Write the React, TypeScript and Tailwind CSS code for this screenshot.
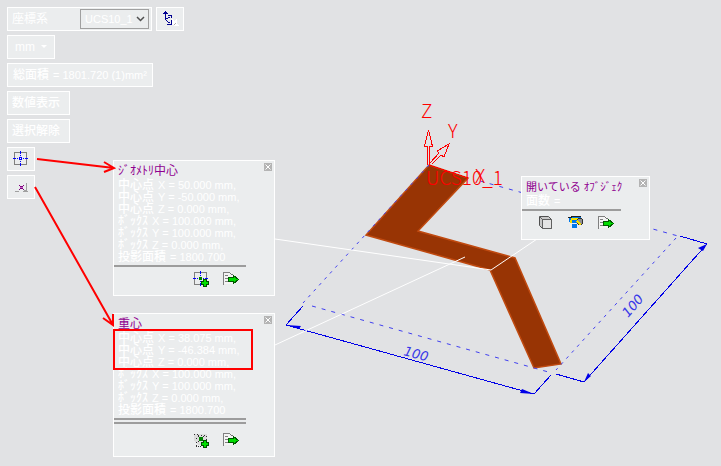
import React from "react";

const jp = "font-['Liberation_Sans','Noto_Sans_CJK_JP',sans-serif]";
const box = "border border-white bg-[#ebedee] text-white";

function CenterIcon({ add = false }: { add?: boolean }) {
  return (
    <svg width="16" height="16" viewBox="0 0 16 16" shapeRendering="crispEdges" aria-hidden="true">
      <rect x="1.5" y="1.5" width="12" height="12" fill="none" stroke="#808080" />
      <path d="M7.5 0v3M7.5 4v1M7.5 10v1M7.5 12v3M0 7.5h3M4 7.5h1M10 7.5h1M12 7.5h3" stroke="#0000ff" />
      <rect x="6.5" y="6.5" width="2" height="2" fill={add ? "#008000" : "#ffffff"} stroke={add ? "#008000" : "#0000ff"} />
      {add && <Plus />}
    </svg>
  );
}

function Plus() {
  return (
    <path d="M10.5 8.5h3v2h2v3h-2v2h-3v-2h-2v-3h2z" fill="#00e000" stroke="#005000" />
  );
}

function GravityIcon({ add = false }: { add?: boolean }) {
  return add ? (
    <svg width="16" height="16" viewBox="0 0 16 16" shapeRendering="crispEdges" aria-hidden="true">
      <path d="M1 2h13v6h-4v5H6L1 9z" fill="#dcdcdc" />
      <path d="M1 2.5h6M5 3.5h9M3 6.5h1M13.5 4v4M3.5 10v4" stroke="#303030" strokeDasharray="1 2" />
      <path d="M3 14.5h6" stroke="#303030" strokeDasharray="1 1" />
      <rect x="6" y="5" width="4" height="4" fill="#008000" />
      <path d="M5 4h1v1H5zM10 4h1v1h-1zM5 9h1v1H5z" fill="#303030" />
      <Plus />
    </svg>
  ) : (
    <svg width="16" height="16" viewBox="0 0 16 16" shapeRendering="crispEdges" aria-hidden="true">
      <path d="M2 12.5h4M10 12.5h5M13.5 4v8M11 11.500h2" stroke="#a0a0a0" />
      <rect x="7" y="7" width="3" height="3" fill="#c060c0" />
      <path d="M6 6h1v1H6zM10 6h1v1h-1zM6 10h1v1H6zM10 10h1v1h-1zM7 7h3v1H7zM7 9h3v1H7z" fill="#800080" />
    </svg>
  );
}

function ExportIcon() {
  return (
    <svg width="16" height="16" viewBox="0 0 16 16" shapeRendering="crispEdges" aria-hidden="true">
      <path d="M1 1h6l4 4v8H1z" fill="#f4f4f4" />
      <path d="M.5 14V1.5h6M2 4.5h3M2 7.5h3M2 10.5h3" fill="none" stroke="#808080" />
      <path d="M7 2l4 3" stroke="#707070" strokeDasharray="1 1" />
      <path d="M5.5 6.5h5v-2l5 4-5 4v-2h-5z" fill="#00dc00" stroke="#005800" />
    </svg>
  );
}

function CubeIcon() {
  return (
    <svg width="16" height="16" viewBox="0 0 16 16" aria-hidden="true">
      <path d="M1.5 1.5h9l3 3v9h-9l-3-3z" fill="#c8c8c8" stroke="#505050" />
      <path d="M4.500 4.500h9v9h-9z" fill="#e4e4e4" stroke="#606060" />
      <path d="M2 2l3 3" stroke="#606060" />
    </svg>
  );
}

function PaintIcon() {
  return (
    <svg width="16" height="16" viewBox="0 0 16 16" shapeRendering="crispEdges" aria-hidden="true">
      <path d="M1 2h12v4H9v2H4V7H1z" fill="#0078e8" />
      <path d="M0 2.5h4M3 1.5h10" stroke="#202020" />
      <path d="M3 4h7M3 5v3" stroke="#f4e000" strokeWidth="2" />
      <ellipse cx="12" cy="6.5" rx="3" ry="3" fill="#909090" stroke="#303030" />
      <path d="M9 6l4 4" stroke="#f4d800" strokeWidth="2" />
      <rect x="4" y="9" width="5" height="4" fill="#0078e8" />
    </svg>
  );
}

function AxesIcon() {
  return (
    <svg width="18" height="18" viewBox="0 0 18 18" shapeRendering="crispEdges" aria-hidden="true">
      <path d="M11 9l2 2 3-2v4l2 3h-3l-4-1z" fill="#ffffff" />
      <path d="M13 15l2-2" stroke="#b0b0b0" />
      <path d="M4 1h1v1h1v1h1v1H5v6H4V4H2V3h1V2h1zM5 8h2v1H5zM7 7h2v1H7zM7 5h4v3h-1V6H7zM5 10h1v1H5zM6 11h1v1H6zM7 12h1v1H7zM8 12h1v1H8zM10 10h1v5H6v-1h4z" fill="#000090" />
    </svg>
  );
}

function CloseButton() {
  return (
    <button type="button" aria-label="閉じる" className="flex size-2 items-center justify-center bg-[#b4b4b4]">
      <svg width="8" height="8" viewBox="0 0 8 8" aria-hidden="true">
        <path d="M1.5 1.5l5 5M6.5 1.5l-5 5" stroke="#ffffff" />
      </svg>
    </button>
  );
}

function Row({ label, value }: { label: string; value: string }) {
  return (
    <div className="flex items-baseline gap-1 whitespace-nowrap">
      <dt className="text-xs leading-3 font-medium">{label}</dt>
      <dd className="text-[11px] leading-3">{value}</dd>
    </div>
  );
}

function Rows({ rows }: { rows: string[][] }) {
  return (
    <dl>
      {rows.map(([label, value]) => (
        <Row key={label + value} label={label} value={value} />
      ))}
    </dl>
  );
}

const geometry = [
  ["中心点", "X = 50.000 mm,"],
  ["中心点", "Y = -50.000 mm,"],
  ["中心点", "Z = 0.000 mm,"],
  ["ﾎﾞｯｸｽ", "X = 100.000 mm,"],
  ["ﾎﾞｯｸｽ", "Y = 100.000 mm,"],
  ["ﾎﾞｯｸｽ", "Z = 0.000 mm,"],
  ["投影面積", "= 1800.700"],
];

const gravity = [
  ["中心点", "X = 38.075 mm,"],
  ["中心点", "Y = -46.384 mm,"],
  ["中心点", "Z = 0.000 mm,"],
  ...geometry.slice(3),
];

type PanelProps = { title: string; className: string; titleSize?: string; children: React.ReactNode };

function Panel({ title, className, titleSize = "text-xs", children }: PanelProps) {
  return (
    <section className={`absolute ${box} ${className}`}>
      <header className="flex items-start justify-between pt-0.5 pr-0.5 pl-1">
        <h2 className={`${titleSize} leading-4 whitespace-nowrap text-[#900090]`}>{title}</h2>
        <CloseButton />
      </header>
      {children}
    </section>
  );
}

function Scene() {
  return (
    <svg className="absolute top-0 left-0" width="721" height="466" viewBox="0 0 721 466" role="img" aria-label="UCS10_1">
      <path d="M429 165L468 178L418 231L515 258L561 364L534 368L490 270L366 235Z" fill="#983404" stroke="#c04a10" strokeWidth="1.5" />
      <g fill="none" stroke="#4040f0">
        <path d="M429 165L303 303" strokeDasharray="3 5" />
        <path d="M312 306L552 373" strokeDasharray="4 6" />
        <path d="M480 181L678 236" strokeDasharray="4 6" />
        <path d="M676 238L556 370" strokeDasharray="3 5" />
      </g>
      <g fill="none" stroke="#0000e8" shapeRendering="crispEdges">
        <path d="M303 306L286 325L534 394L551 375M556 374L584 382L707 244L680 236" />
      </g>
      <g fill="#0000e8">
        <path d="M286 325l15 1-2 3zM534 394l-14-1 2-4zM584 382l4-9 3 3zM707 244l-9 4 5 3z" />
      </g>
      <g fill="#3838e8" fontFamily="DejaVu Sans, sans-serif" fontSize="13" fontStyle="italic">
        <text transform="translate(403 355) rotate(15)">100</text>
        <text transform="translate(628 318) rotate(-49)">100</text>
      </g>
      <path d="M275 239L491 270L540 237M275 345L465 257" fill="none" stroke="#ffffff" />
      <g fill="none" stroke="#ff0000" shapeRendering="crispEdges">
        <path d="M427.5 165V146.5h-3L428.5 130l4 16.5h-3V165M430 163l9-10-2-2 12-7-5 13-3-2-9 9M429 165l39 13" />
      </g>
      <g fill="#ff0000" fontFamily="Noto Sans CJK JP, sans-serif" fontWeight="300" fontSize="19">
        <text x="421" y="118">Z</text>
        <text x="448" y="138">Y</text>
        <text x="475" y="183">X</text>
        <text x="426" y="185">UCS10_1</text>
      </g>
    </svg>
  );
}

function Annotations() {
  return (
    <svg className="pointer-events-none absolute top-0 left-0" width="721" height="466" viewBox="0 0 721 466" aria-hidden="true">
      <g fill="none" stroke="#ff0000" strokeWidth="2">
        <path d="M37 159L114 168M104 162L114 168L104 172" />
        <path d="M35 187L113 325M103 318L113 325V314" />
        <rect x="114" y="330" width="138" height="39" />
      </g>
    </svg>
  );
}

export default function App() {
  const toolButton = `${box} flex h-6 items-center whitespace-nowrap`;
  return (
    <main className={`relative min-h-screen overflow-hidden bg-[#e1e2e4] ${jp} text-xs`}>
      <Scene />
      <div className="relative flex flex-col items-start gap-1 pt-[7px] pl-[7px]">
        <div className="flex gap-1">
          <div className={`${box} flex h-6 items-center gap-8 pr-0.5 pl-1`}>
            <label htmlFor="ucs">座標系</label>
            <div className="relative flex">
              <select id="ucs" defaultValue="UCS10_1" className="h-5 w-[69px] appearance-none border border-[#a0a0a0] bg-[#ebedee] pl-1 text-[11px] text-white">
                <option>UCS10_1</option>
              </select>
              <svg className="pointer-events-none absolute top-1.5 right-1" width="9" height="8" viewBox="0 0 9 8" aria-hidden="true">
                <path d="M1 2l3.5 3.5L8 2" fill="none" stroke="#505050" strokeWidth="1.5" />
              </svg>
            </div>
          </div>
          <button type="button" aria-label="座標系" className={`${toolButton} w-7 justify-center`}><AxesIcon /></button>
        </div>
        <button type="button" className={`${toolButton} w-12 justify-center gap-1.5`}>
          mm
          <svg width="6" height="4" viewBox="0 0 6 4" aria-hidden="true"><path d="M0 0h6L3 3z" fill="#ffffff" /></svg>
        </button>
        <output className={`${toolButton} gap-1 px-[5px]`}>
          <span className="font-medium">総面積</span>
          <span className="text-[11px]">= 1801.720 (1)mm²</span>
        </output>
        <button type="button" className={`${toolButton} w-[63px] pl-1 font-medium`}>数値表示</button>
        <button type="button" className={`${toolButton} w-[63px] pl-1 font-medium`}>選択解除</button>
        <button type="button" aria-label="ジオメトリ中心" className={`${toolButton} w-7 justify-center`}><CenterIcon /></button>
        <button type="button" aria-label="重心" className={`${toolButton} w-7 justify-center`}><GravityIcon /></button>
      </div>

      <Panel title="ｼﾞｵﾒﾄﾘ中心" className="top-[160px] left-[113px] w-[162px] pb-2">
        <div className="pl-1"><Rows rows={geometry} /></div>
        <hr className="mt-0.5 mr-7 border-t-2 border-[#9c9c9c]" />
        <div className="flex justify-end gap-3.5 pt-1 pr-[35px]">
          <button type="button" aria-label="追加"><CenterIcon add /></button>
          <button type="button" aria-label="出力"><ExportIcon /></button>
        </div>
      </Panel>

      <Panel title="重心" className="top-[313px] left-[113px] w-[162px] pb-2">
        <div className="pl-1"><Rows rows={gravity} /></div>
        <div className="mt-0.5 mr-7 h-1.5 border-y-2 border-[#9c9c9c]" />
        <div className="flex justify-end gap-3.5 pt-2 pr-[35px]">
          <button type="button" aria-label="追加"><GravityIcon add /></button>
          <button type="button" aria-label="出力"><ExportIcon /></button>
        </div>
      </Panel>

      <Panel title="開いている ｵﾌﾞｼﾞｪｸ" titleSize="text-[11px]" className="top-[176px] left-[521px] w-[129px] pb-2">
        <div className="pl-1"><Rows rows={[["面数", "="]]} /></div>
        <hr className="mt-0.5 mr-7 border-t-2 border-[#9c9c9c]" />
        <div className="flex justify-end gap-3.5 pt-1 pr-[35px]">
          <button type="button" aria-label="ソリッド"><CubeIcon /></button>
          <button type="button" aria-label="色"><PaintIcon /></button>
          <button type="button" aria-label="出力"><ExportIcon /></button>
        </div>
      </Panel>
      <Annotations />
    </main>
  );
}
